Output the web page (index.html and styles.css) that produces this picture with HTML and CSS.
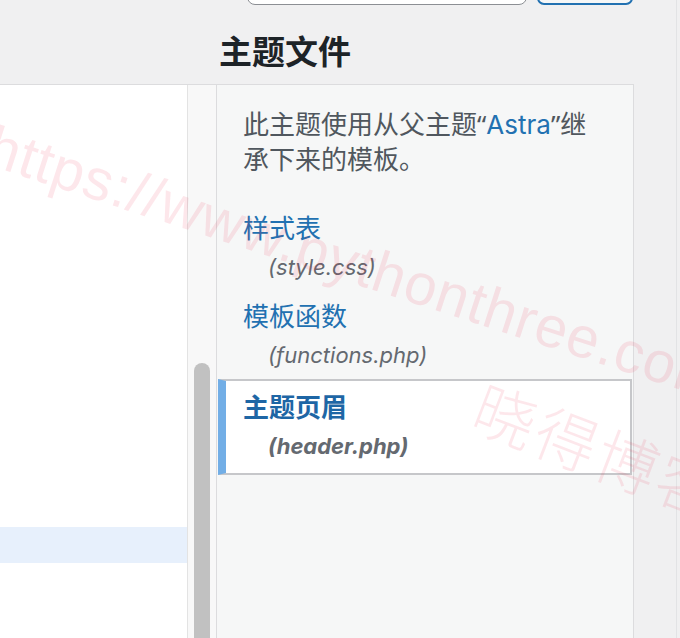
FILE: index.html
```html
<!DOCTYPE html>
<html lang="zh-CN">
<head>
<meta charset="utf-8">
<title>主题文件</title>
<link rel="stylesheet" href="styles.css">
</head>
<body>
<div class="screen">
  <div class="main">
    <div class="toolbar">
      <div class="search-input"></div>
      <div class="select-btn"></div>
    </div>
    <h2 class="heading">主题文件</h2>
    <div class="content">
      <div class="editor">
        <div class="code">
          <div class="active-line"></div>
        </div>
        <div class="scroll-track">
          <div class="scroll-thumb"></div>
        </div>
      </div>
      <div class="sidebar">
        <p class="desc">此主题使用从父主题<span class="q">“</span><a class="link">Astra</a><span class="q">”</span>继承下来的模板。</p>
        <ul class="files">
          <li class="file">
            <a class="file-name">样式表</a>
            <span class="file-path">(style.css)</span>
          </li>
          <li class="file">
            <a class="file-name">模板函数</a>
            <span class="file-path">(functions.php)</span>
          </li>
          <li class="file file-active">
            <a class="file-name">主题页眉</a>
            <span class="file-path">(header.php)</span>
          </li>
        </ul>
      </div>
    </div>
  </div>
  <div class="edge"></div>
  <div class="watermark">
    <span class="wm-url">https://www.pythonthree.com</span>
    <span class="wm-name">晓得博客</span>
  </div>
</div>
</body>
</html>
```

FILE: styles.css
```css
html, body {
  margin: 0;
  padding: 0;
}

body {
  background: #f0f0f1;
  font-family: Inter, "Noto Sans CJK SC", sans-serif;
  color: #3c434a;
  width: 680px;
  height: 638px;
  overflow: hidden;
}

.screen {
  position: relative;
  display: flex;
  width: 680px;
  height: 638px;
  overflow: hidden;
}

.main {
  width: 676px;
  flex: none;
}

.edge {
  flex: 1;
  border-left: 1px solid #e2e3e5;
  background: #f0f0f1;
}

/* top controls (cut off by the viewport) */
.toolbar {
  display: flex;
  gap: 10px;
  margin-top: -31px;
  margin-left: 247px;
  height: 36px;
}

.search-input {
  width: 280px;
  height: 36px;
  box-sizing: border-box;
  background: #fff;
  border: 1.5px solid #8c8f94;
  border-radius: 8px;
}

.select-btn {
  width: 96px;
  height: 36px;
  box-sizing: border-box;
  background: #f6f7f7;
  border: 2px solid #2271b1;
  border-radius: 7px;
}

.heading {
  margin: 0 0 0 219px;
  padding-top: 25px;
  font-size: 33px;
  line-height: 40px;
  height: 40px;
  font-weight: 700;
  color: #1d2327;
  font-family: "Noto Sans CJK SC", sans-serif;
}

.content {
  display: flex;
  margin-top: 14px;
  height: 600px;
}

.editor {
  display: flex;
  width: 216px;
  flex: none;
  border-top: 1px solid #dcdcde;
}

.code {
  width: 187px;
  background: #fff;
  display: flex;
  flex-direction: column;
}

.active-line {
  margin-top: 442px;
  height: 36px;
  background: #e7f0fc;
}

.scroll-track {
  width: 28px;
  border-left: 1px solid #e3e3e3;
  background: #f8f8f8;
  display: flex;
  flex-direction: column;
  align-items: center;
}

.scroll-thumb {
  margin-top: 278px;
  width: 16px;
  flex: 1;
  background: #c1c1c1;
  border-radius: 8px 8px 0 0;
}

.sidebar {
  width: 416px;
  flex: none;
  background: #f6f7f7;
  border: 1px solid #dcdcde;
  border-bottom: none;
}

.desc {
  margin: 0;
  padding: 22px 26px 0;
  font-size: 26px;
  line-height: 35px;
  color: #50575e;
}

.q {
  font-family: "Noto Sans", sans-serif;
}

.link {
  color: #2271b1;
}

.files {
  list-style: none;
  margin: 26px 0 0;
  padding: 0;
}

.file {
  padding: 8px 26px 4px;
}

.file-name {
  display: block;
  font-size: 26px;
  line-height: 36px;
  color: #2271b1;
}

.file-path {
  display: block;
  padding-left: 25px;
  font-size: 22px;
  line-height: 40px;
  font-style: italic;
  color: #646970;
}

.file-active {
  margin: 0 1px;
  padding: 9px 17px 7px;
  background: #fff;
  border: 2px solid #c6c7ca;
  border-left: 8px solid #72aee6;
}

.file-active .file-name,
.file-active .file-path {
  font-weight: 700;
}

.file-active .file-name {
  color: #1e66a5;
}

/* watermark overlay */
.watermark {
  position: absolute;
  left: 0;
  top: 0;
  width: 680px;
  height: 638px;
  pointer-events: none;
}

.wm-url {
  position: absolute;
  left: 0;
  top: 112px;
  transform-origin: left top;
  transform: rotate(18deg);
  white-space: nowrap;
  font-family: "Liberation Sans", sans-serif;
  font-size: 58px;
  letter-spacing: 1px;
  color: rgba(236, 40, 70, 0.11);
}

.wm-name {
  position: absolute;
  left: 494px;
  top: 360px;
  transform-origin: left top;
  transform: rotate(21deg);
  white-space: nowrap;
  font-family: "Noto Sans CJK SC", sans-serif;
  font-size: 62px;
  font-weight: 300;
  letter-spacing: 3px;
  color: rgba(236, 40, 70, 0.11);
}
```
